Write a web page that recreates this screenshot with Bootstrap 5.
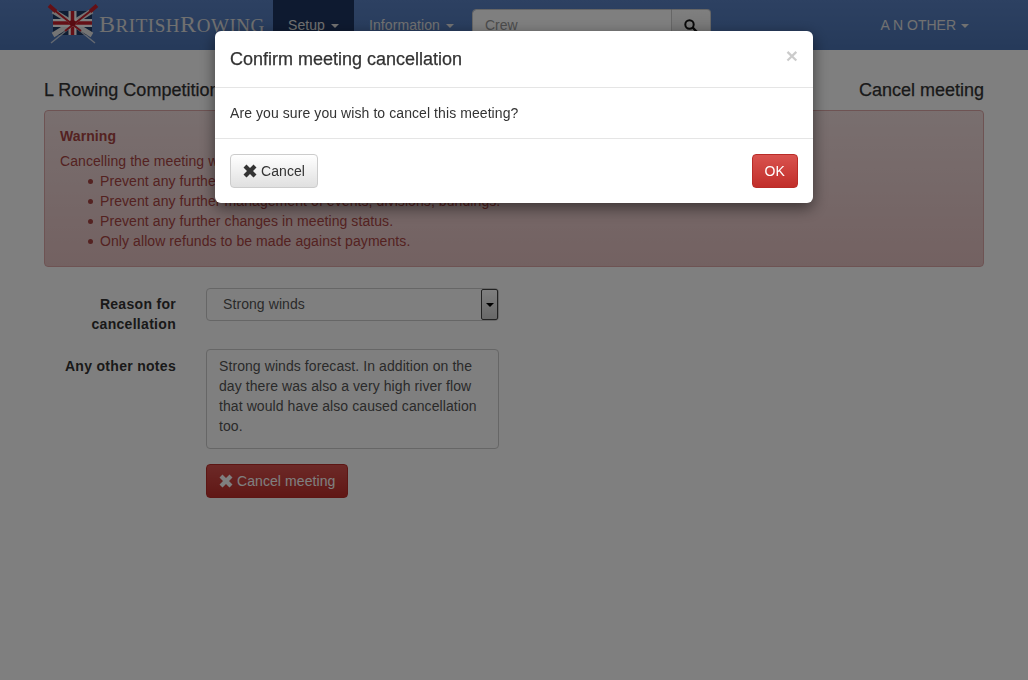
<!DOCTYPE html>
<html lang="en">
<head>
<meta charset="utf-8">
<title>Cancel meeting</title>
<link href="https://cdn.jsdelivr.net/npm/bootstrap@5.3.0/dist/css/bootstrap.min.css" rel="stylesheet">
<style>
body{font-family:"Liberation Sans",Arial,sans-serif;font-size:14px;line-height:20px;color:#333;background:#fff;height:680px;overflow:hidden;letter-spacing:.08px}
.site-nav{height:50px;padding:0 44px 0 48px;background:linear-gradient(#5a82c4,#4c74b4);flex-wrap:nowrap;justify-content:flex-start;align-items:flex-start}
.logo-link{display:flex;align-items:center;width:225px;height:50px;flex:none;text-decoration:none}
.logo-link svg{margin-left:-1px}
.logo-word{font-family:"Liberation Serif",serif;color:#e0e0e0;font-size:19px;line-height:50px;white-space:nowrap;letter-spacing:.55px}
.logo-word b{font-weight:400;font-size:24px}
.site-nav .nav-link{color:#e2e2e2;padding:15px;line-height:20px;height:50px;font-size:14px}
.site-nav .nav-link.active{background:#1c3460;color:#e2e2e2}
.site-nav .dropdown-toggle::after{border-top-color:currentColor;vertical-align:2px;margin-left:6px;border-width:4px 4px 0}
.search-box{width:239px;margin:9px 0 0 3px;height:34px}
.search-box .form-control{height:34px;font-size:14px;border-radius:4px 0 0 4px;padding:5px 12px 7px;border:1px solid #ccc;color:#555}
.search-box .form-control::placeholder{color:#999}
.search-btn{width:39px;border:1px solid #ccc;border-left-width:0;border-radius:0 4px 4px 0;background:linear-gradient(#fff,#e0e0e0);padding:0;display:flex;align-items:center;justify-content:center}
.user-menu{margin-left:auto;letter-spacing:0}
.user-menu .nav-link.dropdown-toggle::after{margin-left:5px}
.page-wrap{width:940px;margin:0 auto 0 44px}
.head-row{height:60px;padding-top:30px;font-size:18px;line-height:20px;letter-spacing:0;-webkit-text-stroke:.25px #333}
.warn-box{height:157px;margin:0;padding:15px;border:1px solid #dca7a7;border-radius:4px;background:linear-gradient(#f2dede,#e7c3c3);color:#a94442}
.warn-box strong{display:block;margin-bottom:5px}
.warn-box ul{margin:0;padding-left:40px;list-style:none}
.warn-box li{position:relative}
.warn-box li::before{content:"";position:absolute;left:-12px;top:8px;width:5px;height:5px;border-radius:50%;background:currentColor}
.field-row{width:454px;margin-top:21px}
.field-row + .field-row{margin-top:0}
.field-label{width:132px;text-align:right;font-weight:700;flex:none;padding-top:6px;letter-spacing:.3px}
.notes-label{margin-top:16px}
.field-body{width:293px;margin-left:30px;flex:none;position:relative}
.reason-select{display:block;width:293px;height:33px;appearance:none;border:1px solid #ccc;border-radius:4px;background:#fff;color:#555;font-size:14px;padding:0 12px 2px 16px;font-family:inherit;letter-spacing:.08px}
.select-arrow{position:absolute;right:1px;top:1px;width:17px;height:31px;background:linear-gradient(#fff,#d2d2d2);border:1px solid #444;border-radius:2px;display:flex;align-items:center;justify-content:center}
.select-arrow i{display:block;border:4px solid transparent;border-top-color:#000;border-bottom:0}
.notes-area{display:block;width:293px;height:100px;margin-top:15px;border:1px solid #ccc;border-radius:4px;padding:6px 12px;font-size:14px;line-height:20px;color:#555;resize:none;font-family:inherit;overflow:hidden;letter-spacing:.08px}
.act-btn{height:34px;padding:6px 12px;font-size:14px;line-height:20px;border-radius:4px;display:inline-flex;align-items:center;gap:4px;letter-spacing:.08px}
.act-default{background:linear-gradient(#fff,#e0e0e0);border:1px solid #ccc;color:#333}
.act-danger{background:linear-gradient(#d9534f,#c12e2a);border:1px solid #b92c28;color:#fff}
.meeting-btn{margin-top:15px}
.modal-dialog.confirm-dialog{max-width:598px;width:598px;margin:31px auto 0}
.confirm-dialog .modal-content{border:0;border-radius:6px;box-shadow:0 5px 15px rgba(0,0,0,.5)}
.confirm-dialog .modal-header{padding:15px;height:57px;border-bottom:1px solid #e5e5e5;align-items:center}
.confirm-dialog .modal-title{font-size:18px;line-height:26px;font-weight:400;letter-spacing:0;-webkit-text-stroke:.25px #333}
.close-x{margin-left:auto;border:0;background:none;padding:0;font-size:21px;font-weight:700;line-height:1;color:#000;opacity:.2;position:relative;top:-4px}
.confirm-dialog .modal-body{padding:15px;height:50px}
.confirm-dialog .modal-footer{padding:15px;height:65px;border-top:1px solid #e5e5e5;justify-content:space-between}
.confirm-dialog .modal-footer>*{margin:0}
</style>
</head>
<body>
<nav class="navbar site-nav">
  <a class="logo-link" href="#">
    <svg width="52" height="42" viewBox="0 0 52 42" aria-hidden="true">
      <rect x="6" y="7" width="39" height="24" fill="#1e3a66"/>
      <path d="M6 7L45 31M45 7L6 31" stroke="#e8e8e8" stroke-width="5"/>
      <path d="M25.500 7V31M6 19H45" stroke="#fff" stroke-width="8"/>
      <path d="M25.500 7V31M6 19H45" stroke="#c8202c" stroke-width="3.500"/>
      <path d="M2 2L48 39M50 2L4 39" stroke="#f0f0f0" stroke-width="1.500" opacity=".75"/>
      <path d="M3 2.500L9 7.500L34 27M49 2.500L43 7.500L18 27" stroke="#c8202c" stroke-width="2"/>
      <path d="M2 1.500L9 7.500M50 1.500L43 7.500" stroke="#c8202c" stroke-width="4"/>
      <circle cx="25.500" cy="19" r="3" fill="#b01824"/>
    </svg>
    <span class="logo-word"><b>B</b>RITISH<b>R</b>OWING</span>
  </a>
  <ul class="nav flex-nowrap">
    <li class="nav-item"><a class="nav-link dropdown-toggle active" href="#">Setup</a></li>
    <li class="nav-item"><a class="nav-link dropdown-toggle" href="#">Information</a></li>
  </ul>
  <form class="search-box d-flex">
    <input class="form-control" type="text" placeholder="Crew">
    <button class="search-btn flex-shrink-0" type="button" aria-label="Search">
      <svg width="14" height="14" viewBox="0 0 14 14"><circle cx="5.500" cy="5.500" r="4.200" fill="none" stroke="#111" stroke-width="2"/><path d="M8.700 8.700L13 13" stroke="#111" stroke-width="2.400"/></svg>
    </button>
  </form>
  <ul class="nav user-menu"><li class="nav-item"><a class="nav-link dropdown-toggle" href="#">A N OTHER</a></li></ul>
</nav>

<main class="page-wrap">
  <div class="head-row d-flex justify-content-between">
    <span>L Rowing Competition</span>
    <span>Cancel meeting</span>
  </div>
  <div class="warn-box">
    <strong>Warning</strong>
    Cancelling the meeting will:
    <ul>
      <li>Prevent any further entries being made.</li>
      <li>Prevent any further management of events, divisions, bundings.</li>
      <li>Prevent any further changes in meeting status.</li>
      <li>Only allow refunds to be made against payments.</li>
    </ul>
  </div>
  <form>
    <div class="field-row d-flex">
      <label class="field-label">Reason for cancellation</label>
      <div class="field-body">
        <select class="reason-select"><option>Strong winds</option></select>
        <span class="select-arrow"><i></i></span>
      </div>
    </div>
    <div class="field-row d-flex">
      <label class="field-label notes-label">Any other notes</label>
      <div class="field-body">
        <textarea class="notes-area" rows="4">Strong winds forecast. In addition on the day there was also a very high river flow that would have also caused cancellation too.</textarea>
        <button type="button" class="btn act-btn act-danger meeting-btn">
          <svg width="14" height="14" viewBox="0 0 14 14"><path d="M.5 3.500L3.500 .5L7 4L10.500 .5L13.500 3.500L10 7L13.500 10.500L10.500 13.500L7 10L3.500 13.500L.5 10.500L4 7Z" fill="currentColor"/></svg>
          Cancel meeting
        </button>
      </div>
    </div>
  </form>
</main>

<div class="modal-backdrop show"></div>
<div class="modal d-block" role="dialog" aria-modal="true">
  <div class="modal-dialog confirm-dialog">
    <div class="modal-content">
      <div class="modal-header">
        <h4 class="modal-title">Confirm meeting cancellation</h4>
        <button class="close-x" type="button" aria-label="Close">×</button>
      </div>
      <div class="modal-body">Are you sure you wish to cancel this meeting?</div>
      <div class="modal-footer">
        <button type="button" class="btn act-btn act-default">
          <svg width="14" height="14" viewBox="0 0 14 14"><path d="M.5 3.500L3.500 .5L7 4L10.500 .5L13.500 3.500L10 7L13.500 10.500L10.500 13.500L7 10L3.500 13.500L.5 10.500L4 7Z" fill="currentColor"/></svg>
          Cancel
        </button>
        <button type="button" class="btn act-btn act-danger">OK</button>
      </div>
    </div>
  </div>
</div>
<script src="https://cdn.jsdelivr.net/npm/bootstrap@5.3.0/dist/js/bootstrap.bundle.min.js"></script>
</body>
</html>
